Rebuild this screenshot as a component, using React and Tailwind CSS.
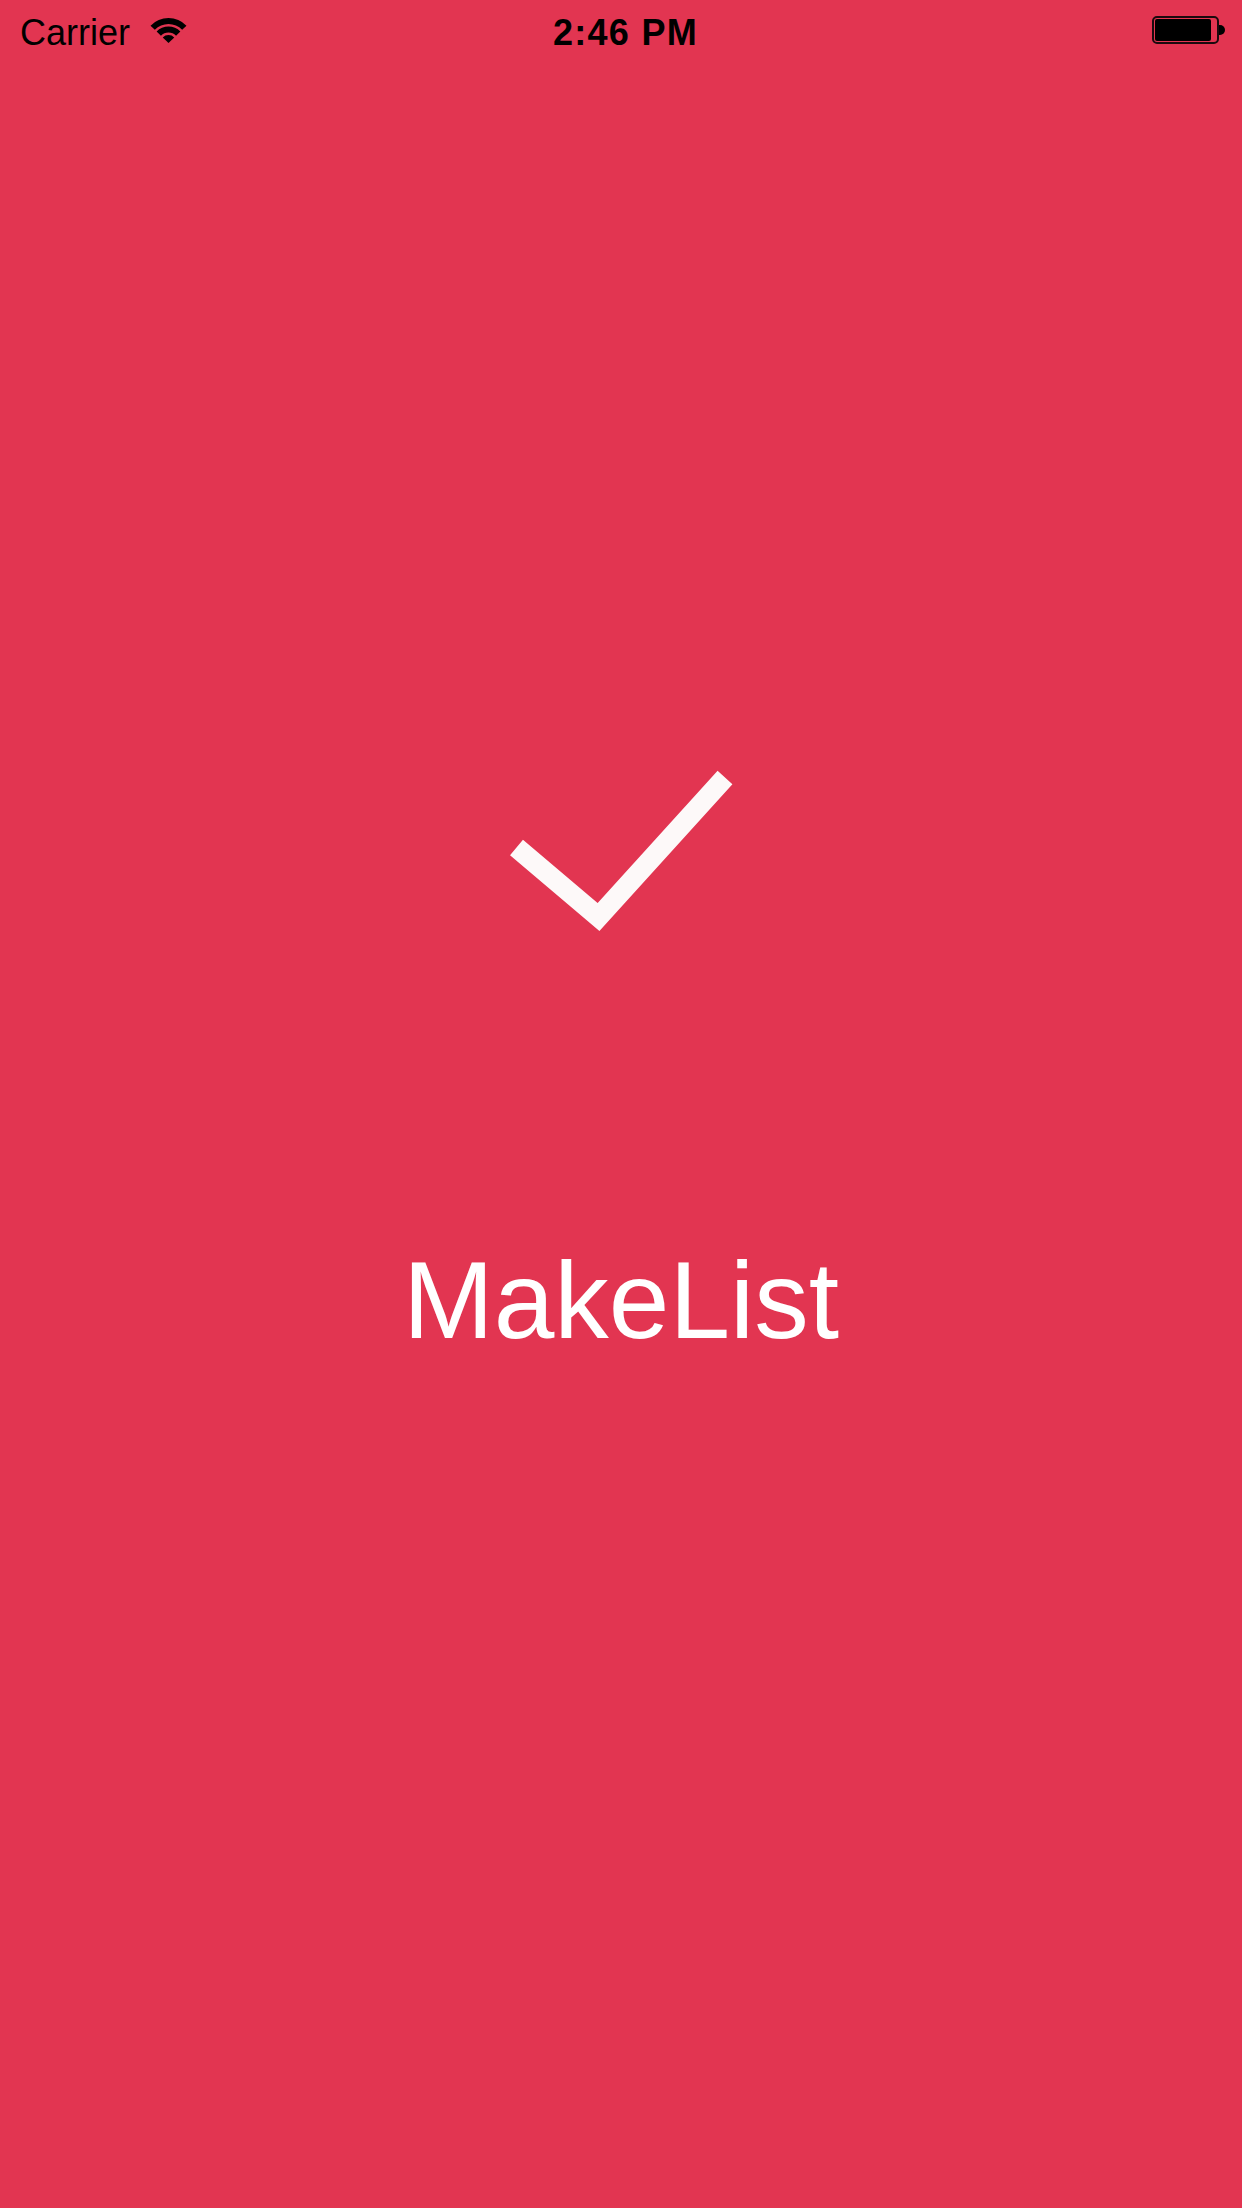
function bandPath(cx, cy, r1, r2, deg) {
  const a = (deg * Math.PI) / 180
  const pt = (r, s) => `${(cx + s * r * Math.sin(a)).toFixed(2)} ${(cy - r * Math.cos(a)).toFixed(2)}`
  if (r1 === 0) {
    return `M${cx} ${cy} L${pt(r2, -1)} A${r2} ${r2} 0 0 1 ${pt(r2, 1)} Z`
  }
  return `M${pt(r2, -1)} A${r2} ${r2} 0 0 1 ${pt(r2, 1)} L${pt(r1, 1)} A${r1} ${r1} 0 0 0 ${pt(r1, -1)} Z`
}

function WifiIcon() {
  return (
    <svg width="37" height="26" viewBox="0 0 37 26" className="block">
      <path d={bandPath(18.5, 25, 0, 8, 46)} fill="#000" />
      <path d={bandPath(18.5, 25, 10.5, 16.5, 46)} fill="#000" />
      <path d={bandPath(18.5, 25, 19, 25, 46)} fill="#000" />
    </svg>
  )
}

function Battery() {
  return (
    <div className="flex items-center h-[28px]">
      <div className="w-[67px] h-[28px] rounded-[5px] border-2 border-[#1a0a0e] p-[1px]">
        <div className="h-full w-[56px] rounded-[2px] bg-black" />
      </div>
      <div className="w-[6px] h-[10px] rounded-r-full bg-black" />
    </div>
  )
}

function StatusBar() {
  return (
    <div
      className="grid grid-cols-3 h-[60px] text-black"
      style={{ fontFamily: '"Liberation Sans", Arial, sans-serif' }}
    >
      <div className="flex items-start pl-[20px] pt-[15px] gap-[20px]">
        <span className="text-[36px] leading-none">Carrier</span>
        <div className="pt-[3px]">
          <WifiIcon />
        </div>
      </div>
      <div className="flex justify-center pt-[15px] pl-[9px]">
        <span className="text-[36px] leading-none font-bold tracking-[1.3px]">2:46 PM</span>
      </div>
      <div className="flex justify-end items-start pt-[16px] pr-[17px]">
        <Battery />
      </div>
    </div>
  )
}

export default function App() {
  return (
    <div className="min-h-screen w-full bg-[#e23551]">
      <StatusBar />
      <div className="flex flex-col items-center pt-[706px]">
        <svg width="240" height="175" viewBox="0 0 240 175" className="block">
          <polyline
            points="15.5,81.5 97.5,151 224,11.5"
            fill="none"
            stroke="#fdf9f9"
            strokeWidth="20"
            strokeLinejoin="miter"
            strokeLinecap="butt"
          />
        </svg>
        <div
          className="mt-[305px] text-white text-[109px] leading-none"
          style={{ fontFamily: '"Liberation Sans", Arial, sans-serif' }}
        >
          MakeList
        </div>
      </div>
    </div>
  )
}
